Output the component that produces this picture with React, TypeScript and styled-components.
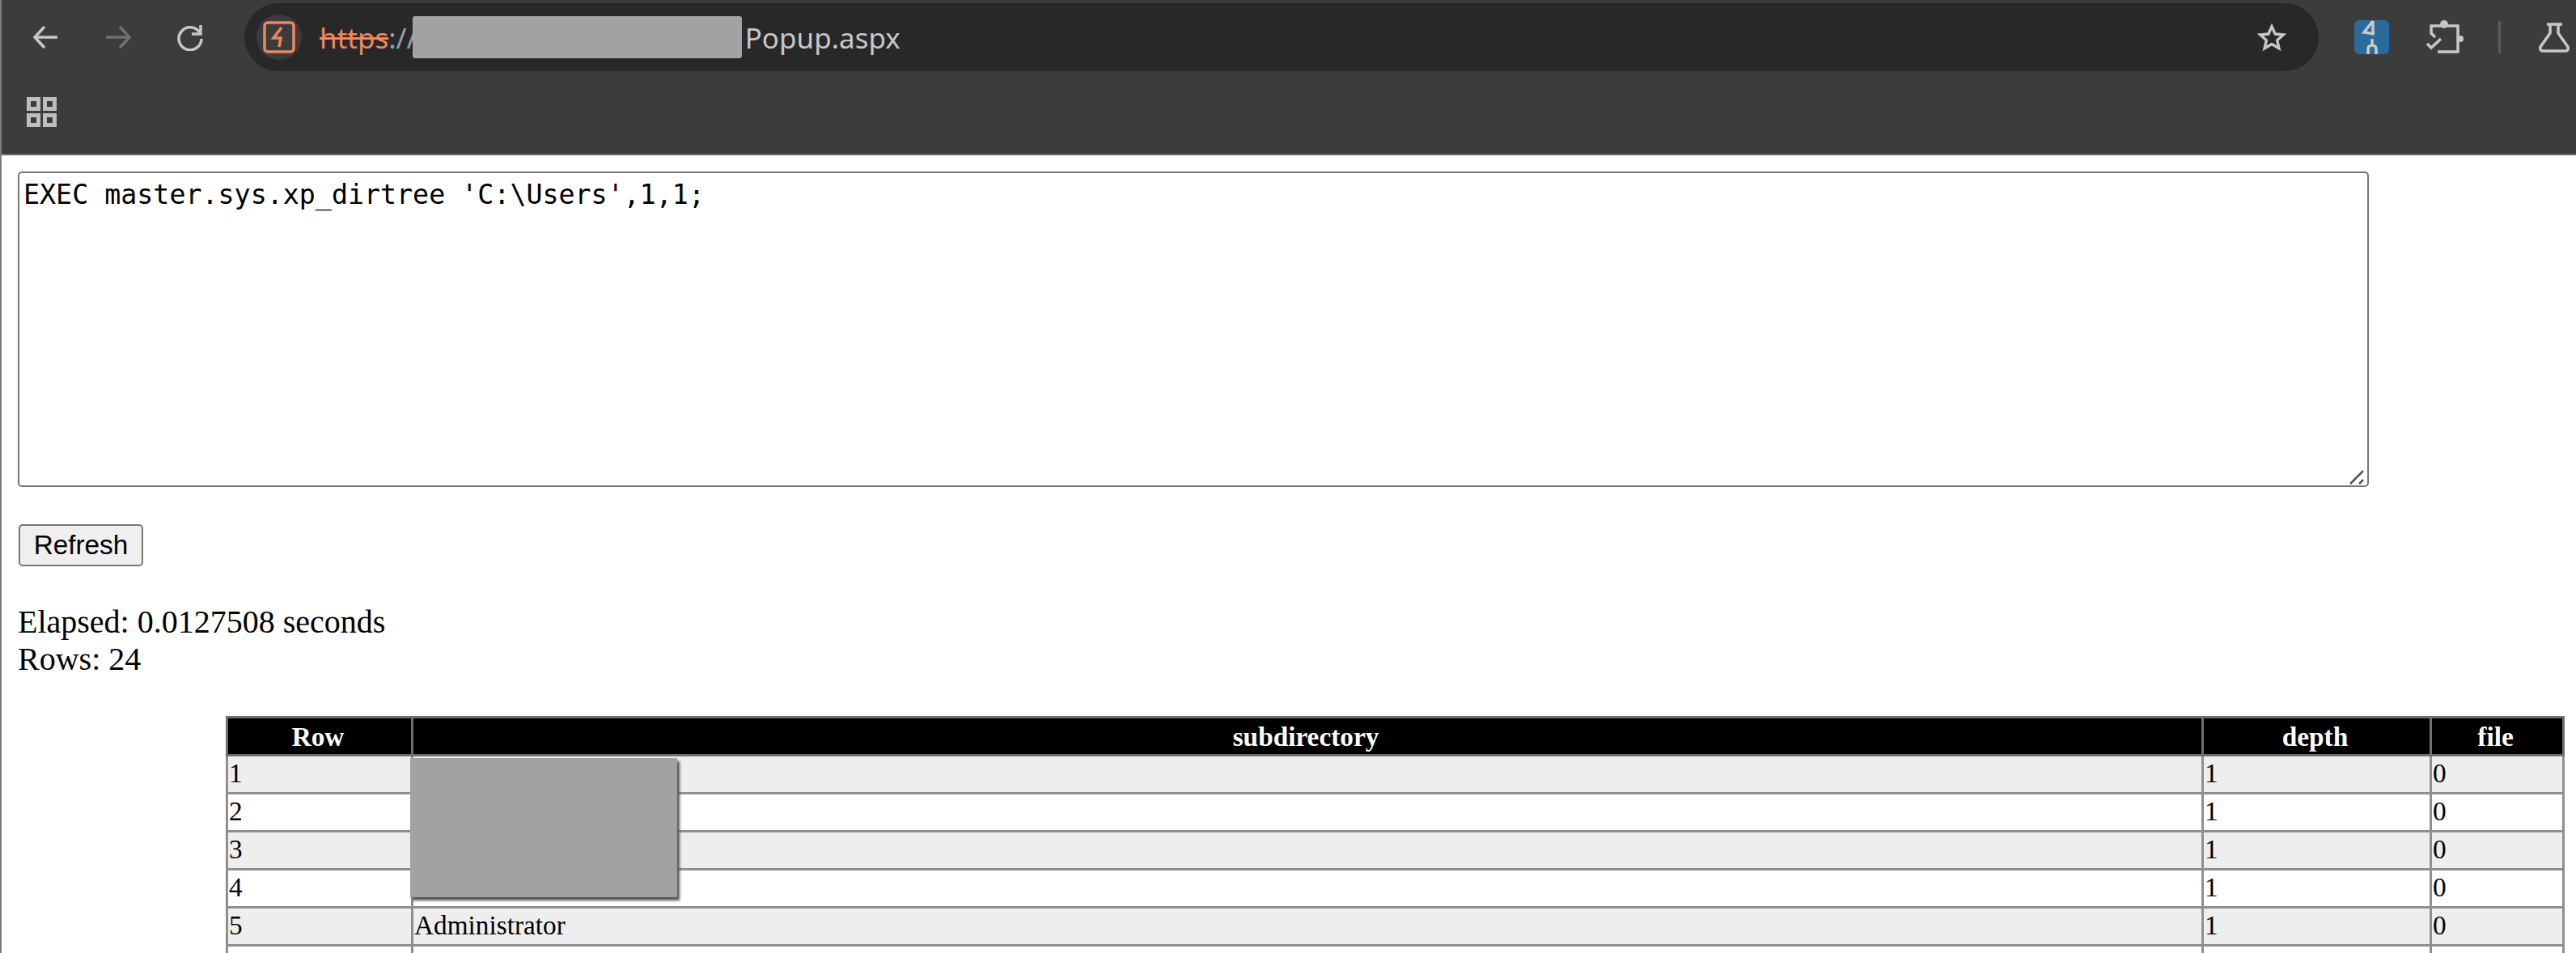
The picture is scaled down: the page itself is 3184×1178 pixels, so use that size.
import styled, { createGlobalStyle } from 'styled-components';

const GlobalStyle = createGlobalStyle`
  html, body {
    margin: 0;
    padding: 0;
    height: 1178px;
    overflow: hidden;
    background: #fff;
  }
`;

const Window = styled.div`
  height: 1178px;
  overflow: hidden;
  border-left: 2px solid #7d7d7d;
  box-sizing: border-box;
`;

const Chrome = styled.header`
  height: 192px;
  box-sizing: border-box;
  background: #3c3c3c;
  border-bottom: 2px solid #6a6a6a;
  color: #c7c7c7;
`;

const Toolbar = styled.div`
  display: flex;
  align-items: center;
  height: 88px;
  padding: 4px 0 0 36px;
  box-sizing: border-box;
`;

const NavButton = styled.span<{ $dim?: boolean }>`
  display: flex;
  width: 36px;
  margin-right: 54px;
  color: ${(p) => (p.$dim ? '#707070' : '#c7c7c7')};
`;

const Omnibox = styled.div`
  display: flex;
  align-items: center;
  flex-shrink: 0;
  width: 2564px;
  height: 84px;
  margin-left: -6px;
  padding: 0 39px 0 15px;
  box-sizing: border-box;
  border-radius: 42px;
  background: #282828;
`;

const SiteChip = styled.span`
  display: flex;
  align-items: center;
  justify-content: center;
  width: 56px;
  height: 56px;
  margin-right: 22px;
  border-radius: 50%;
  background: #3a3b3c;
  color: #f0865a;
`;

const Url = styled.div`
  display: flex;
  align-items: center;
  flex: 1;
  font-family: 'Noto Sans', sans-serif;
  font-size: 35px;
  color: #c7c7c7;
`;

const Scheme = styled.span`
  color: #f0865a;
  text-decoration: line-through;
`;

const Separator = styled.span`
  color: #9aa0a6;
`;

const RedactedHost = styled.span`
  flex-shrink: 0;
  width: 407px;
  height: 52px;
  margin: 0 4px 0 -6px;
  border-radius: 3px;
  background: #a2a2a5;
`;

const Actions = styled.div`
  display: flex;
  align-items: center;
  margin-left: 44px;
`;

const ExtensionBadge = styled.span`
  display: flex;
  width: 43px;
  height: 42px;
  border-radius: 6px;
  background: #2a6b9c;
  color: #c9c9c9;
`;

const ActionIcon = styled.span`
  display: flex;
  margin-left: 45px;
  color: #c7c7c7;
`;

const ActionDivider = styled.span`
  width: 3px;
  height: 40px;
  margin: 0 47px 0 43px;
  background: #5c5c5c;
`;

const Bookmarks = styled.div`
  display: flex;
  align-items: center;
  height: 100px;
  padding-left: 31px;
  box-sizing: border-box;
  color: #bdbdbd;
`;

const Page = styled.main`
  padding: 20px 0 0 20px;
  color: #000;
  font-family: 'Liberation Serif', serif;
  font-size: 40px;
  line-height: 46px;
`;

const QueryArea = styled.div`
  position: relative;
  width: 2906px;
`;

const QueryBox = styled.textarea`
  display: block;
  width: 100%;
  height: 390px;
  padding: 7px 5px 5px;
  box-sizing: border-box;
  border: 2.5px solid #767676;
  border-radius: 5px;
  outline: none;
  resize: none;
  background: #fff;
  color: #000;
  font-family: 'DejaVu Sans Mono', monospace;
  font-size: 33.3px;
  line-height: 39px;
`;

const ResizeGrip = styled.svg`
  position: absolute;
  right: 5px;
  bottom: 3px;
  pointer-events: none;
`;

const RefreshButton = styled.button`
  display: block;
  width: 154px;
  height: 52px;
  margin: 46px 0 0 1px;
  padding: 0;
  box-sizing: border-box;
  border: 2.5px solid #767676;
  border-radius: 5px;
  background: #efefef;
  color: #000;
  font-family: 'Liberation Sans', sans-serif;
  font-size: 33.3px;
`;

const Stats = styled.div`
  margin-top: 46px;
`;

const TableWrap = styled.div`
  position: relative;
  width: 2888px;
  margin: 47px 0 0 257px;
`;

const ResultTable = styled.table`
  width: 100%;
  table-layout: fixed;
  border-collapse: collapse;
  font-size: 33.3px;
  line-height: 39px;
`;

const HeadCell = styled.th`
  padding: 2.5px 4px 2.5px 0;
  border: 3px solid #6e6e6e;
  background: #000;
  color: #fff;
  font-weight: 700;
  text-align: center;
`;

const Row = styled.tr<{ $shaded: boolean }>`
  background: ${(p) => (p.$shaded ? '#eee' : '#fff')};
`;

const Cell = styled.td`
  padding: 0.5px 2.5px 4.5px 1px;
  border: 3px solid #8f8f8f;
  text-align: left;
`;

const RedactionBlock = styled.div`
  position: absolute;
  top: 52px;
  left: 228px;
  width: 330px;
  height: 172px;
  background: #a2a2a5;
  box-shadow: 3px 4px 3px #555;
`;

const rows = [
  { row: 1, name: '' },
  { row: 2, name: '' },
  { row: 3, name: '' },
  { row: 4, name: '' },
  { row: 5, name: 'Administrator' },
  { row: 6, name: '' },
];

const App = () => (
  <Window>
    <GlobalStyle />
    <Chrome>
      <Toolbar>
        <NavButton>
          <svg width="36" height="34" viewBox="0 0 36 34" fill="none" stroke="currentColor" strokeWidth="3.5">
            <path d="M33 17H5M17 4 5 17l12 13" />
          </svg>
        </NavButton>
        <NavButton $dim>
          <svg width="36" height="34" viewBox="0 0 36 34" fill="none" stroke="currentColor" strokeWidth="3.5">
            <path d="M3 17h29M20 4l12 13-12 13" />
          </svg>
        </NavButton>
        <NavButton>
          <svg width="34" height="34" viewBox="0 0 34 34" fill="none" stroke="currentColor" strokeWidth="3.5">
            <path d="M29 11.5A14 14 0 1 0 31 19" />
            <path d="M30 2v11H19" />
          </svg>
        </NavButton>
        <Omnibox>
          <SiteChip>
            <svg width="40" height="40" viewBox="0 0 40 40" fill="none" stroke="currentColor" strokeWidth="3.5">
              <rect x="2" y="2" width="36" height="36" rx="4" />
              <path d="M23 8 13 21h9l-2 11" />
            </svg>
          </SiteChip>
          <Url>
            <Scheme>https</Scheme>
            <Separator>://</Separator>
            <RedactedHost />
            Popup.aspx
          </Url>
          <svg width="38" height="37" viewBox="0 0 24 24" fill="none" stroke="#c7c7c7" strokeWidth="2.2">
            <path d="m12 3 2.7 6.100 6.600.6-5 4.400 1.500 6.500L12 17.200l-5.800 3.400 1.500-6.500-5-4.400 6.600-.6z" />
          </svg>
        </Omnibox>
        <Actions>
          <ExtensionBadge>
            <svg width="43" height="42" viewBox="0 0 43 42" fill="none" stroke="currentColor" strokeWidth="3.5">
              <path d="M23 1 12 15l13 2M23 1v16M22 23v8M17 42v-6q0-5 5-5t5 5v6" />
            </svg>
          </ExtensionBadge>
          <ActionIcon>
            <svg width="47" height="42" viewBox="0 0 47 42" fill="none" stroke="currentColor" strokeWidth="3.5">
              <path d="M12 21 7 16V7h33v32H15" />
              <path d="m2 29 5 5 12-11" />
              <circle cx="23" cy="5" r="5" fill="currentColor" stroke="none" />
              <circle cx="43" cy="23" r="4" fill="currentColor" stroke="none" />
            </svg>
          </ActionIcon>
          <ActionDivider />
          <svg width="38" height="38" viewBox="0 0 38 38" fill="none" stroke="#c7c7c7" strokeWidth="3.5">
            <path d="M10 3h19M14 3v11L2 31q-1 5 3 5h28q4 0 3-5L24 14V3" />
          </svg>
        </Actions>
      </Toolbar>
      <Bookmarks>
        <svg width="37" height="37" viewBox="0 0 37 37" fill="none" stroke="currentColor" strokeWidth="5">
          <rect x="2.5" y="2.5" width="12" height="12" />
          <rect x="22.5" y="2.5" width="12" height="12" />
          <rect x="2.5" y="22.5" width="12" height="12" />
          <rect x="22.5" y="22.5" width="12" height="12" />
        </svg>
      </Bookmarks>
    </Chrome>
    <Page>
      <QueryArea>
        <QueryBox readOnly spellCheck={false} defaultValue={"EXEC master.sys.xp_dirtree 'C:\\Users',1,1;"} />
        <ResizeGrip width="20" height="20" viewBox="0 0 20 20" fill="none" stroke="#555" strokeWidth="2.5">
          <path d="M2 19 18 3M13 19l5-5" />
        </ResizeGrip>
      </QueryArea>
      <RefreshButton>Refresh</RefreshButton>
      <Stats>
        Elapsed: 0.0127508 seconds
        <br />
        Rows: 24
      </Stats>
      <TableWrap>
        <ResultTable>
          <colgroup>
            <col width="229" />
            <col width="2213" />
            <col width="282" />
            <col width="164" />
          </colgroup>
          <thead>
            <tr>
              <HeadCell>Row</HeadCell>
              <HeadCell>subdirectory</HeadCell>
              <HeadCell>depth</HeadCell>
              <HeadCell>file</HeadCell>
            </tr>
          </thead>
          <tbody>
            {rows.map((r) => (
              <Row key={r.row} $shaded={r.row % 2 === 1}>
                <Cell>{r.row}</Cell>
                <Cell>{r.name}</Cell>
                <Cell>1</Cell>
                <Cell>0</Cell>
              </Row>
            ))}
          </tbody>
        </ResultTable>
        <RedactionBlock />
      </TableWrap>
    </Page>
  </Window>
);

export default App;
